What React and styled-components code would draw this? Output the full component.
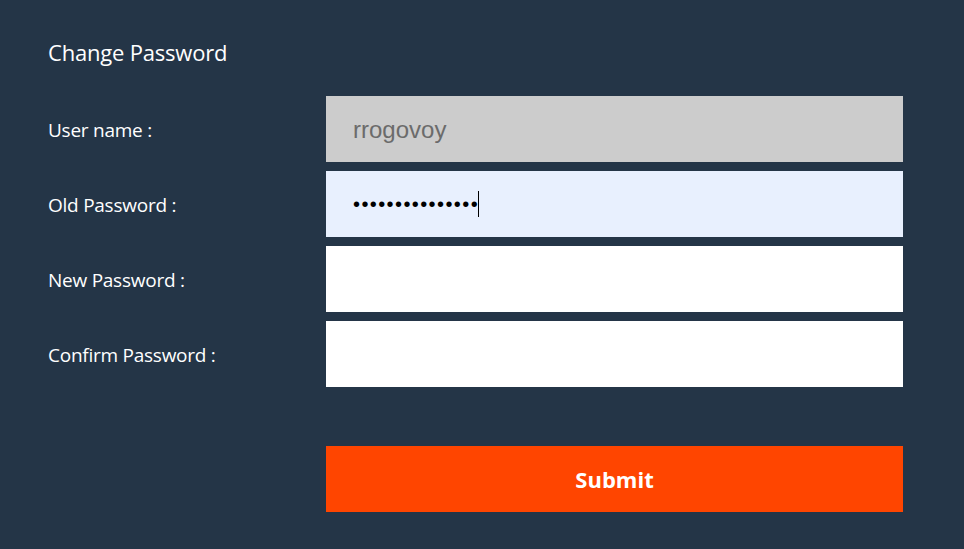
import React from "react";
import styled, { createGlobalStyle } from "styled-components";

const Global = createGlobalStyle`
  html, body { margin: 0; padding: 0; background: #243547; }
  body { font-family: "Open Sans", "Noto Sans", sans-serif; }
`;

const Page = styled.div`
  width: 964px;
  height: 549px;
  box-sizing: border-box;
  padding: 37px 61px 0 48px;
  background: #243547;
  color: #ffffff;
`;

const Title = styled.h1`
  margin: 0 0 29px 0;
  font-size: 22px;
  line-height: 30px;
  font-weight: 400;
  letter-spacing: -0.2px;
  color: #ffffff;
`;

const Form = styled.form`
  display: grid;
  grid-template-columns: 278px 577px;
  row-gap: 9px;
`;

const Label = styled.label`
  display: flex;
  align-items: center;
  font-size: 19px;
  font-weight: 400;
  letter-spacing: -0.25px;
  color: #ffffff;
  padding-top: 2px;
`;

const Field = styled.div`
  display: flex;
  align-items: center;
  box-sizing: border-box;
  height: 66px;
  padding-left: 27px;
  background: ${(p) => p.$bg};
  color: ${(p) => p.$fg || "#000"};
  font-family: "Liberation Sans", Arial, sans-serif;
  font-size: 20px;
`;

const Input = styled.input`
  box-sizing: border-box;
  width: 100%;
  height: 66px;
  border: none;
  outline: none;
  padding: 2px 0 0 27px;
  margin: 0;
  background: ${(p) => p.$bg};
  color: ${(p) => p.$fg || "#000"};
  font-family: "Liberation Sans", Arial, sans-serif;
  font-size: 24px;
`;

const Dots = styled.span`
  letter-spacing: 1.4px;
  font-size: 20px;
  line-height: 24px;
`;

const Caret = styled.span`
  display: inline-block;
  width: 1px;
  height: 26px;
  background: #000;
  margin-left: -1px;
`;

const Submit = styled.button`
  grid-column: 2;
  height: 66px;
  margin: 50px 0 0 0;
  border: none;
  padding: 0;
  background: #ff4500;
  color: #ffffff;
  font-family: "Open Sans", "Noto Sans", sans-serif;
  font-size: 22px;
  font-weight: 700;
  cursor: pointer;
`;

export default function App() {
  return (
    <>
      <Global />
      <Page>
        <Title>Change Password</Title>
        <Form onSubmit={(e) => e.preventDefault()}>
          <Label>User name :</Label>
          <Input $bg="#cccccc" $fg="#6b6b6b" defaultValue="rrogovoy" readOnly />
          <Label>Old Password :</Label>
          <Field $bg="#e8f0fe">
            <Dots>•••••••••••••••</Dots>
            <Caret />
          </Field>
          <Label>New Password :</Label>
          <Input $bg="#ffffff" type="password" />
          <Label>Confirm Password :</Label>
          <Input $bg="#ffffff" type="password" />
          <Submit type="submit">Submit</Submit>
        </Form>
      </Page>
    </>
  );
}
